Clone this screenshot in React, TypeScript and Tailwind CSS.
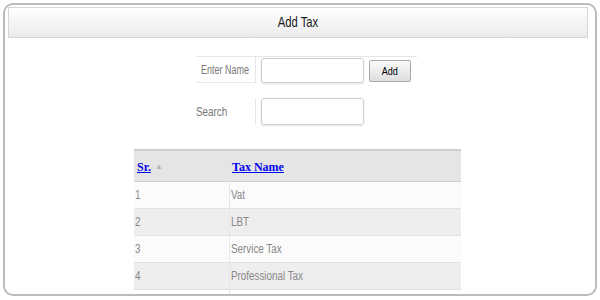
import React from 'react';

const sans = { fontFamily: '"Liberation Sans", Arial, sans-serif' };
const serif = { fontFamily: '"Liberation Serif", "Times New Roman", serif' };

const taxes = ['Vat', 'LBT', 'Service Tax', 'Professional Tax'];

// the original page text is set in a narrow face; squeeze Liberation Sans to match
const Narrow = ({ children, center = false, tight = false }: { children: React.ReactNode; center?: boolean; tight?: boolean }) => (
    <span className={`inline-block whitespace-nowrap ${tight ? 'scale-x-[0.75]' : 'scale-x-[0.82]'} ${center ? 'origin-center' : 'origin-left'}`}>{children}</span>
);

const App = () => {
    return (
        <div className="w-[600px] h-[300px] bg-white pt-[3px] pl-[3px]" style={sans}>
            <div className="w-[594px] h-[293px] border-2 border-[#bcbcbc] rounded-[10px] overflow-hidden">
                {/* title bar */}
                <div className="pt-[2px] pl-[3px]">
                    <div className="w-[580px] h-[31px] border border-[#d6d6d6] bg-gradient-to-b from-[#ffffff] to-[#ebebeb] flex items-center justify-center text-[15px] text-[#1a1a1a]">
                        <Narrow center tight>Add Tax</Narrow>
                    </div>
                </div>

                {/* form */}
                <div className="ml-[191px] mt-[18px]">
                    <div className="flex items-start w-[221px] h-[26px] border-t border-[#e6e6e6]">
                        <div className="w-[60px] h-[26px] shrink-0 border-r border-b border-[#e6e6e6] flex items-center justify-center text-[12px] text-[#777]">
                            <Narrow center tight>Enter Name</Narrow>
                        </div>
                        <input className="ml-[5px] mt-[1px] w-[103px] h-[25px] rounded-[3px] border border-[#cfcfcf] shadow-[0_1px_2px_rgba(0,0,0,0.12)] outline-none" />
                        <button className="ml-[5px] mt-[3px] w-[42px] h-[22px] rounded-[2px] border border-[#a9a9a9] bg-gradient-to-b from-[#fafafa] to-[#dedede] text-[11px] text-black">
                            <Narrow center>Add</Narrow>
                        </button>
                    </div>
                    <div className="flex items-start mt-[16px] h-[27px]">
                        <div className="w-[60px] h-[27px] shrink-0 border-r border-[#e6e6e6] flex items-center text-[12px] text-[#777]">
                            <Narrow>Search</Narrow>
                        </div>
                        <input className="ml-[5px] w-[103px] h-[27px] rounded-[3px] border border-[#cfcfcf] shadow-[0_1px_2px_rgba(0,0,0,0.12)] outline-none" />
                    </div>
                </div>

                {/* list */}
                <table className="ml-[129px] mt-[24px] w-[327px] border-collapse">
                    <thead>
                        <tr className="h-[31px] bg-[#e5e5e5] border-t-2 border-b border-[#cdcdcd]">
                            <th className="w-[95px] pl-[3px] text-left align-middle">
                                <span className="font-bold text-[12px] text-[#0000ee] underline" style={serif}>Sr.</span>
                                <span className="ml-[4px] text-[8px] text-[#b5b5b5] align-middle">▲</span>
                            </th>
                            <th className="pl-[3px] text-left align-middle">
                                <span className="font-bold text-[12px] text-[#0000ee] underline" style={serif}>Tax Name</span>
                            </th>
                        </tr>
                    </thead>
                    <tbody>
                        {taxes.map((t, i) => (
                            <tr key={t} className={`h-[27px] border-b border-[#e2e2e2] ${i % 2 ? 'bg-[#eeeeee]' : 'bg-[#fbfbfb]'}`}>
                                <td className="pl-[1px] text-[12px] text-[#888]"><Narrow>{i + 1}</Narrow></td>
                                <td className="pl-[1px] text-[12px] text-[#888] border-l border-[#e6e6e6]"><Narrow>{t}</Narrow></td>
                            </tr>
                        ))}
                        <tr className="h-[10px] bg-white">
                            <td></td>
                            <td className="border-l border-[#e6e6e6]"></td>
                        </tr>
                    </tbody>
                </table>
            </div>
        </div>
    );
};

export default App;
